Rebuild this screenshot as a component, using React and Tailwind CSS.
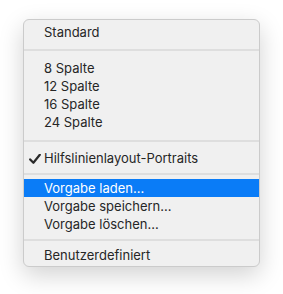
import React from 'react';

const Row = ({ children, active, checked }) => (
    <div className={`relative h-[18px] pl-[20px] leading-[18px] ${active ? 'bg-[#0a7cf7] text-white' : 'text-[#262626]'}`}>
        {checked && (
            <svg className="absolute left-[5px] top-[5px]" width="12" height="10" viewBox="0 0 12 10">
                <path d="M1.2 5.4 L4.4 8.8 L10.8 0.8" fill="none" stroke="#2a2a2a" strokeWidth="2.2" strokeLinecap="round" strokeLinejoin="round" />
            </svg>
        )}
        {children}
    </div>
);

const Sep = ({ top, bottom }) => (
    <div className={top}>
        <div className={`h-[2px] bg-[#dedede] ${bottom}`}></div>
    </div>
);

export default function App() {
    return (
        <div className="min-h-screen bg-white pt-[19px] pl-[23px]">
            <div
                className="w-[237px] rounded-[6px] border border-[#cbcbcb] bg-[#f0f0f0] pt-[3px] pb-[2px] text-[13px] shadow-[0_8px_24px_rgba(0,0,0,0.18)]"
                style={{ fontFamily: 'Inter, "Liberation Sans", sans-serif' }}
            >
                <Row>Standard</Row>
                <Sep top="pt-[8px]" bottom="mb-[8px]" />
                <Row>8 Spalte</Row>
                <Row>12 Spalte</Row>
                <Row>16 Spalte</Row>
                <Row>24 Spalte</Row>
                <Sep top="pt-[9px]" bottom="mb-[7px]" />
                <Row checked>Hilfslinienlayout-Portraits</Row>
                <Sep top="pt-[6px]" bottom="mb-[4px]" />
                <Row active>Vorgabe laden...</Row>
                <Row>Vorgabe speichern...</Row>
                <Row>Vorgabe löschen...</Row>
                <Sep top="pt-[6px]" bottom="mb-[5px]" />
                <Row>Benutzerdefiniert</Row>
            </div>
        </div>
    );
}
